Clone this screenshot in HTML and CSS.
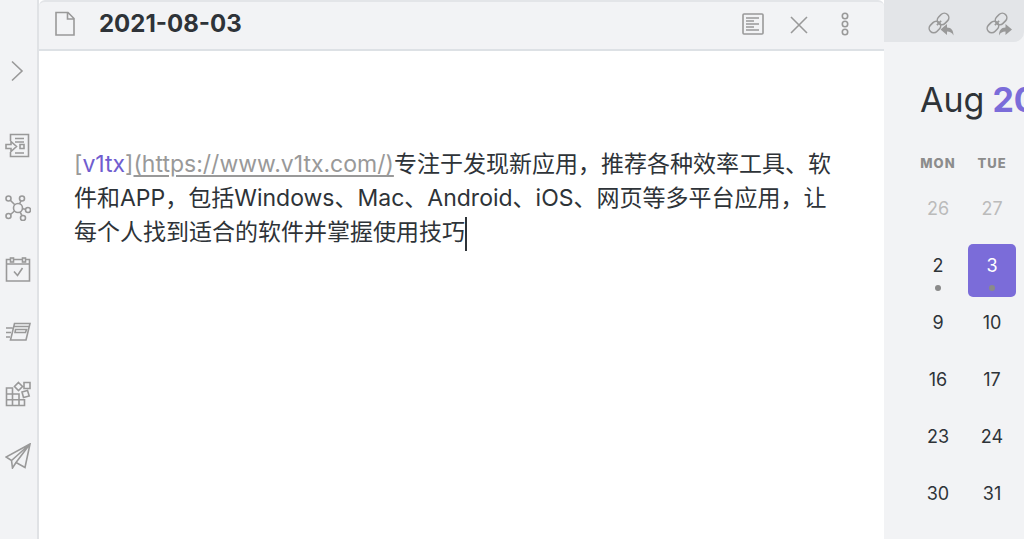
FILE: index.html
```html
<!DOCTYPE html>
<html lang="zh-CN">
<head>
<meta charset="utf-8">
<meta name="viewport" content="width=device-width, initial-scale=1">
<title>2021-08-03</title>
<link rel="stylesheet" href="styles.css">
</head>
<body>
<div class="app">
  <nav class="ribbon" aria-label="Ribbon">
    <button class="icon-button expand" aria-label="Expand sidebar"><svg viewBox="0 0 26 26"><path d="M7 3.500l10 9.500-10 9.500"/></svg></button>
    <button class="icon-button" aria-label="Quick switcher"><svg viewBox="0 0 26 26"><path d="M5.500 8V1.500h18v22h-18V19M10 5.500h9M10 9h9M10 20h9M1 11.500h5V8.500l5.500 5-5.500 5v-3H1zM15 11.500h4v4h-4z"/></svg></button>
    <button class="icon-button" aria-label="Graph view"><svg viewBox="0 0 26 26"><circle cx="13" cy="13" r="4.500"/><circle cx="3.500" cy="3.500" r="2.500"/><circle cx="17" cy="3.500" r="2.500"/><circle cx="23" cy="15" r="2.500"/><circle cx="3.500" cy="21" r="2.500"/><circle cx="18" cy="23" r="2.500"/><path d="M5.300 5.300l4.500 4.500M16 5.800l-1.500 3M17.500 13.700l3 .6M5.500 19.500l4-3.500M17 20.700l-2-3.700"/></svg></button>
    <button class="icon-button" aria-label="Daily note"><svg viewBox="0 0 26 26"><path d="M5 2.500H1.500v21.500h23v-21.500h-3.500M8.500 2.500h9.500M1.500 7h23M9 14.500l3.500 4 5-7.500"/><rect x="5.500" y="1" width="3" height="4"/><rect x="17.500" y="1" width="3" height="4"/></svg></button>
    <button class="icon-button" aria-label="Random note"><svg viewBox="0 0 26 26"><path d="M9.500 4.500h15.500l-4 16.500H5.500zM9 7.500h15M10.500 10.500h11l-1 3h-10.500zM1 9h6.500M1 13.500h5M1 18h4"/></svg></button>
    <button class="icon-button" aria-label="Insert template"><svg viewBox="0 0 26 26"><path d="M1.500 7h6v17.500h-6zM1.500 13h12.500v11.500M1.500 18.700h18v5.800h-18M14 18.700v-5.700M19 1.500h6v6h-6zM13.500 1.500l4 4-4 4-4-4zM17 11l5.500-1.500 1.700 5.500-5.700 1.500z"/></svg></button>
    <button class="icon-button" aria-label="Publish"><svg viewBox="0 0 26 26"><path d="M25 1L1 14l5.500 3.500L25 1 11 19.500l9 5zM6.500 17.500l1 7.500 3.500-5.500"/></svg></button>
  </nav>

  <main class="pane">
    <header class="pane-header">
      <svg class="file-icon" viewBox="0 0 20 26"><path d="M1 1.500h12l6 6v16.500H1zM12.500 1.500V8H19"/></svg>
      <h1 class="title">2021-08-03</h1>
      <div class="actions">
        <button class="icon-button" aria-label="Preview"><svg viewBox="0 0 26 26"><rect x="3" y="3" width="20" height="20" rx="1"/><path d="M6 7h13M6 10h8M6 13h13M6 16h8M6 19h13"/></svg></button>
        <button class="icon-button" aria-label="Close"><svg viewBox="0 0 26 26"><path d="M5 6l16 16M21 6L5 22"/></svg></button>
        <button class="icon-button" aria-label="More options"><svg viewBox="0 0 26 26"><circle cx="13" cy="5" r="2.700"/><circle cx="13" cy="13" r="2.700"/><circle cx="13" cy="21" r="2.700"/></svg></button>
      </div>
    </header>
    <div class="editor">
      <p class="note"><span class="muted">[</span><a class="name" href="https://www.v1tx.com/">v1tx</a><span class="muted">]</span><a class="url" href="https://www.v1tx.com/">(https://www.v1tx.com/)</a>专注于发现新应用，推荐各种效率工具、软件和APP，包括Windows、Mac、Android、iOS、网页等多平台应用，让每个人找到适合的软件并掌握使用技巧<span class="caret"></span></p>
    </div>
  </main>

  <aside class="sidebar">
    <div class="tabs">
      <button class="icon-button" aria-label="Backlinks"><svg viewBox="0 0 26 26"><g transform="rotate(-45 11 12)"><rect x="-1" y="7.500" width="12.500" height="9" rx="4.500"/><rect x="10.500" y="7.500" width="12.500" height="9" rx="4.500"/><path d="M8 12h6"/></g><path class="solid" d="M12.500 18.500l6.500-5.500v3.500c4.500 0 6.500 3 6.500 8-1.500-3-3.500-4-6.500-4v3.500z"/></svg></button>
      <button class="icon-button" aria-label="Outgoing links"><svg viewBox="0 0 26 26"><g transform="rotate(-45 11 12)"><rect x="-1" y="7.500" width="12.500" height="9" rx="4.500"/><rect x="10.500" y="7.500" width="12.500" height="9" rx="4.500"/><path d="M8 12h6"/></g><path class="solid" d="M26 18.500l-6.500-5.500v3.500c-4.500 0-6.500 3-6.500 8 1.500-3 3.500-4 6.500-4v3.500z"/></svg></button>
    </div>
    <section class="calendar">
      <h2 class="month">Aug <span class="year">2021</span></h2>
      <table class="days">
        <thead><tr><th scope="col">MON</th><th scope="col">TUE</th></tr></thead>
        <tbody>
          <tr><td class="faint"><div class="day">26</div></td><td class="faint"><div class="day">27</div></td></tr>
          <tr><td><div class="day noted">2</div></td><td><div class="day noted active">3</div></td></tr>
          <tr><td><div class="day">9</div></td><td><div class="day">10</div></td></tr>
          <tr><td><div class="day">16</div></td><td><div class="day">17</div></td></tr>
          <tr><td><div class="day">23</div></td><td><div class="day">24</div></td></tr>
          <tr><td><div class="day">30</div></td><td><div class="day">31</div></td></tr>
        </tbody>
      </table>
    </section>
  </aside>
</div>
</body>
</html>
```
FILE: styles.css
```css
* { box-sizing: border-box; }

body {
  margin: 0;
  background: #f2f3f5;
  color: #2e3338;
  font-family: Inter, "Noto Sans CJK SC", sans-serif;
}

.app {
  display: flex;
  min-height: 100vh;
  overflow: hidden;
}

svg {
  display: block;
  width: 26px;
  height: 26px;
  fill: none;
  stroke: #999;
  stroke-width: 1.6;
}

.solid { fill: #999; stroke: none; }

.icon-button {
  padding: 0;
  border: 0;
  background: none;
}

.ribbon {
  display: flex;
  flex-direction: column;
  align-items: center;
  gap: 36px;
  flex: 0 0 39px;
  padding: 58px 2px 0 0;
  border-right: 2px solid #e0e2e5;
}

.expand { margin-bottom: 13px; }

.pane {
  flex: 1;
  min-width: 0;
  background: #fff;
}

.pane-header {
  display: flex;
  align-items: center;
  height: 51px;
  padding: 0 26px 3px 16px;
  background: #f2f3f5;
  border-top: 2px solid #e3e5e8;
  border-bottom: 2px solid #dde1e5;
  border-radius: 6px 6px 0 0;
}

.file-icon { width: 20px; }

.title {
  flex: 1;
  margin: 0 0 0 24px;
  font-size: 24px;
  line-height: 32px;
  font-weight: 700;
}

.actions { display: flex; gap: 20px; }

.editor { padding: 96px 40px 40px 35px; }

.note {
  margin: 0;
  font-size: 23px;
  line-height: 34px;
}

.muted, .url { color: #999; }
.name { color: #705dcf; text-decoration: none; }
.url { text-underline-offset: 3px; }

.caret {
  display: inline-block;
  height: 34px;
  margin-right: -2px;
  border-left: 2px solid #2e3338;
  vertical-align: middle;
}

.sidebar {
  flex: 0 0 140px;
  overflow: hidden;
}

.tabs {
  display: flex;
  align-items: center;
  gap: 32px;
  height: 42px;
  padding: 5px 0 0 44px;
  background: #e3e5e8;
  border-radius: 0 0 10px 0;
}

.tabs svg { overflow: visible; }

.calendar { padding: 36px 0 0 27px; }

.month {
  display: flex;
  gap: 8px;
  margin: 0 0 28px 9px;
  font-size: 34px;
  line-height: 44px;
  font-weight: 400;
}

.year { color: #7b6cd9; font-weight: 700; }

.days {
  width: 108px;
  table-layout: fixed;
  border-collapse: collapse;
  text-align: center;
}

.days th {
  height: 35px;
  padding: 0 0 9px;
  color: #8c8c8c;
  font-size: 13px;
  line-height: 26px;
  font-weight: 800;
  letter-spacing: 1px;
}

.days td {
  height: 57px;
  padding: 2px 3px;
  font-size: 18px;
}

.days .faint { color: #bbb; }

.day {
  height: 53px;
  padding-top: 11px;
  line-height: 22px;
  border-radius: 5px;
}

.noted::after {
  content: "";
  display: block;
  width: 6px;
  height: 6px;
  margin: 8px auto 0;
  border-radius: 50%;
  background: #8a8a8a;
}

.active { background: #7b6cd9; color: #fff; }
```
